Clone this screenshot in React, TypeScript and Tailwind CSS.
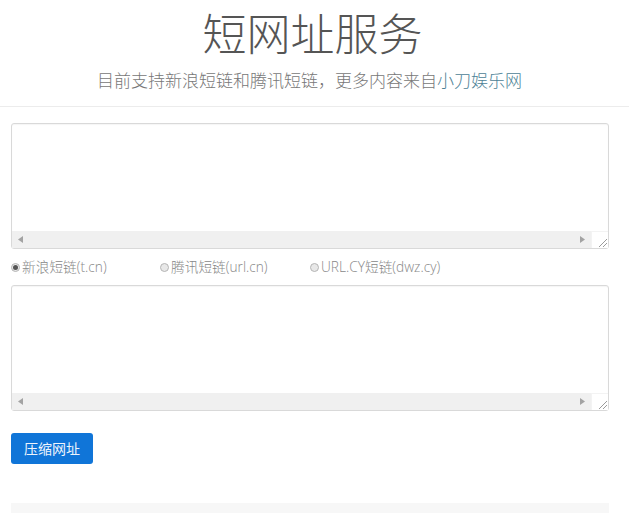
import React from "react";

function Radio({ checked }: { checked?: boolean }) {
  return (
    <span className="inline-flex h-[9px] w-[9px] items-center justify-center rounded-full border border-[#b5b5b5] bg-[#e8e8e8]">
      {checked ? <span className="h-[5px] w-[5px] rounded-full bg-[#555]" /> : null}
    </span>
  );
}

function ScrollBox() {
  return (
    <div className="flex h-[126px] w-full flex-col rounded-[3px] border border-[#d9d9d9] bg-white shadow-[inset_0_1px_1px_rgba(0,0,0,0.04)]">
      <textarea className="w-full flex-1 resize-none bg-transparent p-2 outline-none" />
      <div className="flex h-[17px]">
        <div className="flex flex-1 items-center justify-between bg-[#f0f0f0] px-[6px]">
          <svg width="5" height="7" viewBox="0 0 5 7">
            <polygon points="5,0 0,3.5 5,7" fill="#a3a3a3" />
          </svg>
          <svg width="5" height="7" viewBox="0 0 5 7">
            <polygon points="0,0 5,3.5 0,7" fill="#a3a3a3" />
          </svg>
        </div>
        <div className="flex h-[17px] w-[17px] items-end justify-end border-l border-t border-[#f3f3f3] bg-white">
          <svg width="12" height="12" viewBox="0 0 12 12">
            <line x1="11" y1="3" x2="3" y2="11" stroke="#9a9a9a" strokeWidth="1" />
            <line x1="11" y1="7" x2="7" y2="11" stroke="#9a9a9a" strokeWidth="1" />
          </svg>
        </div>
      </div>
    </div>
  );
}

export default function App() {
  return (
    <div
      className="min-h-[524px] bg-white"
      style={{ fontFamily: '"Open Sans", "Noto Sans CJK SC", sans-serif' }}
    >
      <div className="border-b border-[#ececec] pb-[13px] text-center">
        <div className="pt-[10px] pr-[4px] text-[44px] font-light leading-[48px] text-[#555]">短网址服务</div>
        <div className="mt-[11px] pr-[10px] text-[17px] font-light leading-[24px] text-[#777]">
          目前支持新浪短链和腾讯短链，更多内容来自<span className="text-[#4d8296]">小刀娱乐网</span>
        </div>
      </div>
      <div className="w-[598px] pl-[11px] pt-[16px]" style={{ boxSizing: "content-box" }}>
        <ScrollBox />
        <div className="mt-[8px] flex h-[20px] items-center text-[13.7px] font-light text-[#888]">
          <label className="flex w-[149px] items-center gap-[2px]">
            <Radio checked />
            <span>新浪短链(t.cn)</span>
          </label>
          <label className="flex w-[150px] items-center gap-[2px]">
            <Radio />
            <span>腾讯短链(url.cn)</span>
          </label>
          <label className="flex items-center gap-[2px]">
            <Radio />
            <span>URL.CY短链(dwz.cy)</span>
          </label>
        </div>
        <div className="mt-[8px]">
          <ScrollBox />
        </div>
        <button className="mt-[22px] flex h-[31px] w-[82px] items-center justify-center rounded-[3px] bg-[#1075d8] text-[14px] text-[#eef4fc]">
          压缩网址
        </button>
        <div className="mt-[39px] h-[10px] w-full bg-[#f7f7f7]" />
      </div>
    </div>
  );
}
